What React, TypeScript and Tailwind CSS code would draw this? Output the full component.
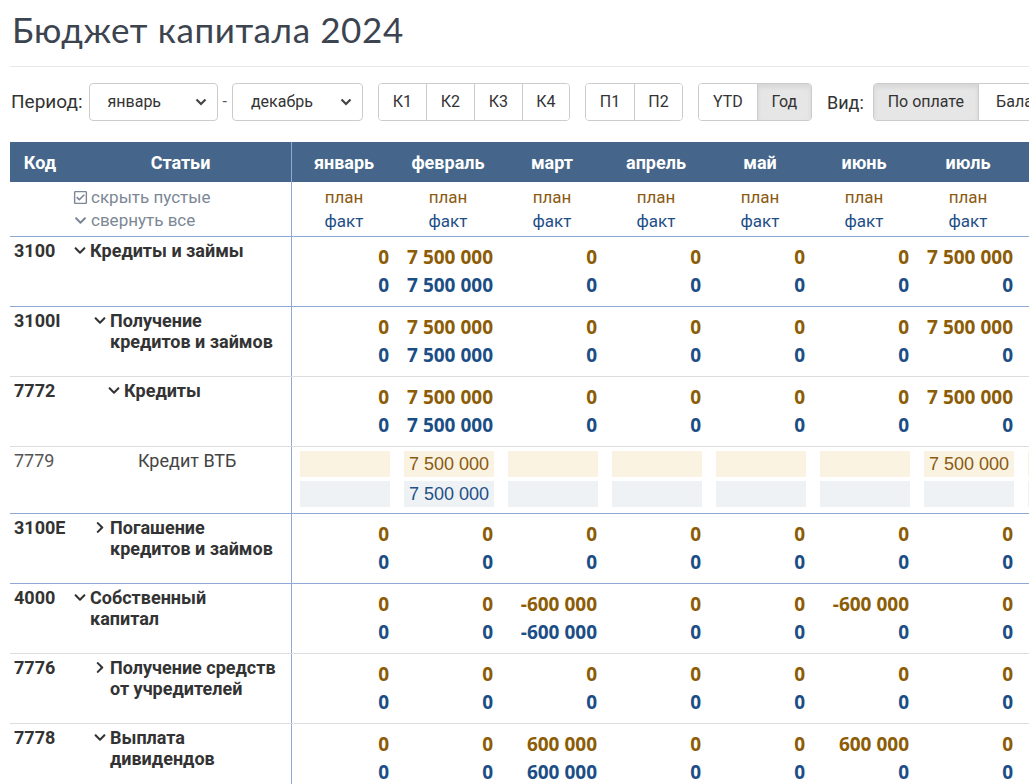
import React from "react";
import { FaChevronDown, FaChevronRight, FaRegCheckSquare } from "react-icons/fa";

const MONTHS = [
  "январь", "февраль", "март", "апрель", "май", "июнь",
  "июль", "август", "сентябрь", "октябрь", "ноябрь", "декабрь",
];

type Row = {
  code: string;
  label: string;
  level: number;
  chevron?: "down" | "right";
  leaf?: boolean;
  plan: number[];
  fact: number[];
  border: "blue" | "gray";
};

const z = (vals: Record<number, number>) =>
  MONTHS.map((_, i) => vals[i] ?? 0);

const ROWS: Row[] = [
  { code: "3100", label: "Кредиты и займы", level: 0, chevron: "down", plan: z({ 1: 7500000, 6: 7500000 }), fact: z({ 1: 7500000 }), border: "blue" },
  { code: "3100I", label: "Получение\nкредитов и займов", level: 1, chevron: "down", plan: z({ 1: 7500000, 6: 7500000 }), fact: z({ 1: 7500000 }), border: "gray" },
  { code: "7772", label: "Кредиты", level: 2, chevron: "down", plan: z({ 1: 7500000, 6: 7500000 }), fact: z({ 1: 7500000 }), border: "gray" },
  { code: "7779", label: "Кредит ВТБ", level: 3, leaf: true, plan: z({ 1: 7500000, 6: 7500000 }), fact: z({ 1: 7500000 }), border: "blue" },
  { code: "3100E", label: "Погашение\nкредитов и займов", level: 1, chevron: "right", plan: z({}), fact: z({}), border: "blue" },
  { code: "4000", label: "Собственный\nкапитал", level: 0, chevron: "down", plan: z({ 2: -600000, 5: -600000 }), fact: z({ 2: -600000 }), border: "gray" },
  { code: "7776", label: "Получение средств\nот учредителей", level: 1, chevron: "right", plan: z({}), fact: z({}), border: "gray" },
  { code: "7778", label: "Выплата\nдивидендов", level: 1, chevron: "down", plan: z({ 2: 600000, 5: 600000 }), fact: z({ 2: 600000 }), border: "gray" },
];

const fmt = (n: number) => {
  const s = Math.abs(n).toString().replace(/\B(?=(\d{3})+(?!\d))/g, " ");
  return n < 0 ? "-" + s : s;
};

const indent = ["pl-[3px]", "pl-[23px]", "pl-[37px]", "pl-[68px]"];

const GRID = "grid grid-cols-[60px_222px_repeat(13,104px)]";

function SelectBox({ value, width }: { value: string; width: string }) {
  return (
    <div className={`${width} h-[38px] border border-[#cccccc] rounded-[4px] bg-white flex items-center justify-between pl-[18px] pr-[10px] text-[16px] text-[#333]`}>
      <span>{value}</span>
      <svg width="12" height="8" viewBox="0 0 12 8" className="text-[#444]">
        <polyline points="1.5,1.5 6,6 10.5,1.5" fill="none" stroke="currentColor" strokeWidth="2.2" />
      </svg>
    </div>
  );
}

function BtnGroup({ items, widths, active }: { items: string[]; widths: string[]; active?: number }) {
  return (
    <div className="flex h-[38px] border border-[#cccccc] rounded-[4px] overflow-hidden">
      {items.map((it, i) => (
        <div
          key={it}
          className={`${widths[i]} flex items-center justify-center text-[16px] text-[#333] ${i > 0 ? "border-l border-[#cccccc]" : ""} ${i === active ? "bg-[#e6e6e6] shadow-[inset_0_3px_5px_rgba(0,0,0,0.08)]" : "bg-white"}`}
        >
          {it}
        </div>
      ))}
    </div>
  );
}

export default function App() {
  return (
    <div className="w-screen overflow-hidden bg-white font-['Roboto',sans-serif] text-[#333]">
      <div className="min-w-max pl-[10px]">
        <h1 className="pt-[7px] pl-[2px] h-[52px] text-[35px] leading-[44px] text-[#3c4450] font-['Lato',sans-serif] tracking-[0.6px]">
          Бюджет капитала 2024
        </h1>
        <div className="mt-[14px] border-t border-[#e8e8e8] w-[1100px]" />

        {/* toolbar */}
        <div className="mt-[16px] flex items-center whitespace-nowrap">
          <span className="text-[19px] text-[#333] mr-[6px] ml-[1px]">Период:</span>
          <SelectBox value="январь" width="w-[129px]" />
          <span className="mx-[5px] text-[16px] text-[#555]">-</span>
          <SelectBox value="декабрь" width="w-[131px]" />
          <div className="ml-[15px]">
            <BtnGroup items={["К1", "К2", "К3", "К4"]} widths={["w-[47px]", "w-[48px]", "w-[48px]", "w-[47px]"]} />
          </div>
          <div className="ml-[15px]">
            <BtnGroup items={["П1", "П2"]} widths={["w-[48px]", "w-[48px]"]} />
          </div>
          <div className="ml-[15px]">
            <BtnGroup items={["YTD", "Год"]} widths={["w-[58px]", "w-[54px]"]} active={1} />
          </div>
          <span className="ml-[15px] mr-[9px] text-[18px] text-[#333]">Вид:</span>
          <BtnGroup items={["По оплате", "Баланс"]} widths={["w-[104px]", "w-[90px]"]} active={0} />
        </div>

        {/* table */}
        <div className="mt-[21px]">
          <div className={`${GRID} h-[40px] bg-[#45668a] text-white font-bold text-[18px]`}>
            <div className="flex items-center justify-center">Код</div>
            <div className="flex items-center justify-center border-r border-[#8eaad4]">Статьи</div>
            {MONTHS.map((m) => (
              <div key={m} className="flex items-center justify-center">{m}</div>
            ))}
            <div className="flex items-center justify-center">итого</div>
          </div>

          <div className={`${GRID} h-[55px] border-b border-[#8eaad4]`}>
            <div />
            <div className="border-r border-[#8eaad4] pt-[4px] pl-[3px] text-[17px] leading-[23px] text-[#7b8795]">
              <div className="flex items-center gap-[3px]">
                <FaRegCheckSquare className="w-[15px] h-[15px]" />
                <span>скрыть пустые</span>
              </div>
              <div className="flex items-center gap-[3px]">
                <FaChevronDown className="w-[15px] h-[13px]" />
                <span>свернуть все</span>
              </div>
            </div>
            {[...MONTHS, "итого"].map((m) => (
              <div key={m} className="pt-[3px] text-center text-[17px] leading-[24px]">
                <div className="text-[#8a5a12]">план</div>
                <div className="text-[#1f4f88]">факт</div>
              </div>
            ))}
          </div>

          {ROWS.map((r) => {
            const totalPlan = r.plan.reduce((a, b) => a + b, 0);
            const totalFact = r.fact.reduce((a, b) => a + b, 0);
            const plan = [...r.plan, totalPlan];
            const fact = [...r.fact, totalFact];
            const borderCls = r.border === "blue" ? "border-[#8eaad4]" : "border-[#dddddd]";
            return (
              <div key={r.code} className={`${GRID} border-b ${borderCls} ${r.leaf ? "h-[67px]" : "h-[70px]"}`}>
                <div className={`pl-[4px] pt-[3px] text-[18px] leading-[22px] ${r.leaf ? "text-[#555] font-normal" : "font-bold text-[#333]"}`}>
                  {r.code}
                </div>
                <div className={`border-r border-[#8eaad4] pt-[3px] ${indent[r.level]} text-[18px] leading-[21px]`}>
                  {r.leaf ? (
                    <span className="text-[#444]">{r.label}</span>
                  ) : (
                    <div className="flex items-start font-bold text-[#333]">
                      <span className="w-[17px] shrink-0 h-[21px] flex items-center">
                        {r.chevron === "down" ? (
                          <FaChevronDown className="w-[14px] h-[13px] text-[#333]" />
                        ) : (
                          <FaChevronRight className="w-[12px] h-[13px] ml-[1px] text-[#333]" />
                        )}
                      </span>
                      <span className="whitespace-pre-line">{r.label}</span>
                    </div>
                  )}
                </div>
                {plan.map((p, i) =>
                  r.leaf ? (
                    <div key={i} className="pt-[4px] pl-[8px] pr-[6px] flex flex-col gap-[4px] font-['Liberation_Sans',sans-serif] text-[18px] leading-[26px]">
                      <div className="h-[26px] bg-[#faf3e1] text-right pr-[5px] text-[#8a5a12]">{p !== 0 ? fmt(p) : ""}</div>
                      <div className="h-[26px] bg-[#eef2f5] text-right pr-[5px] text-[#1f4f88]">{fact[i] !== 0 ? fmt(fact[i]) : ""}</div>
                    </div>
                  ) : (
                    <div key={i} className="pt-[6px] pr-[7px] text-right font-['Open_Sans',sans-serif] font-bold text-[19px] leading-[28px]">
                      <div className="text-[#8c5c06]">{fmt(p)}</div>
                      <div className="text-[#1c4e86]">{fmt(fact[i])}</div>
                    </div>
                  )
                )}
              </div>
            );
          })}
        </div>
      </div>
    </div>
  );
}
